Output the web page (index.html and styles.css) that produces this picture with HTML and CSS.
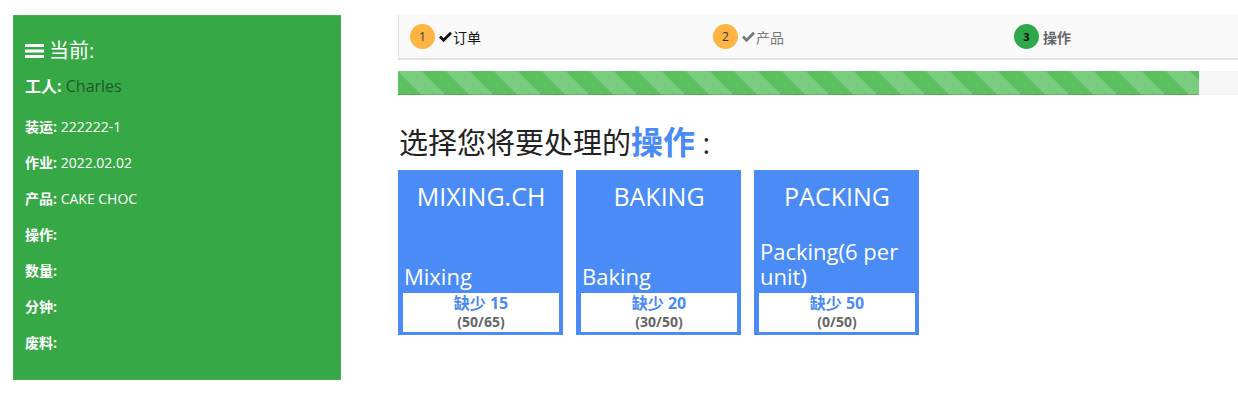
FILE: index.html
```html
<!DOCTYPE html>
<html lang="zh">
<head>
<meta charset="utf-8">
<title>操作</title>
<link rel="stylesheet" href="styles.css">
</head>
<body>
<div class="page">
  <aside class="sidebar">
    <div class="side-title">
      <svg class="burger" width="19" height="14" viewBox="0 0 19 14"><rect x="0" y="0" width="19" height="3"/><rect x="0" y="5.5" width="19" height="3"/><rect x="0" y="11" width="19" height="3"/></svg>
      <span>当前:</span>
    </div>
    <div class="worker"><b>工人:</b> <span class="worker-name">Charles</span></div>
    <ul class="facts">
      <li><b>装运:</b> 222222-1</li>
      <li><b>作业:</b> 2022.02.02</li>
      <li><b>产品:</b> CAKE CHOC</li>
      <li><b>操作:</b></li>
      <li><b>数量:</b></li>
      <li><b>分钟:</b></li>
      <li><b>废料:</b></li>
    </ul>
  </aside>

  <main class="main">
    <nav class="stepper">
      <div class="step">
        <span class="num num-done">1</span>
        <span class="label label-first"><svg class="check" width="13" height="11" viewBox="0 0 13 11"><path d="M1 5.6 L4.6 9.2 L12 1.8" fill="none" stroke="currentColor" stroke-width="2.8"/></svg>订单</span>
      </div>
      <div class="step">
        <span class="num num-done">2</span>
        <span class="label label-done"><svg class="check" width="13" height="11" viewBox="0 0 13 11"><path d="M1 5.6 L4.6 9.2 L12 1.8" fill="none" stroke="currentColor" stroke-width="2.8"/></svg>产品</span>
      </div>
      <div class="step">
        <span class="num num-active">3</span>
        <span class="label label-active">操作</span>
      </div>
    </nav>

    <div class="progress"><div class="progress-bar" style="width: 95.4%"></div></div>

    <h2 class="prompt">选择您将要处理的<strong>操作</strong> :</h2>

    <div class="cards">
      <div class="card">
        <div class="card-code">MIXING.CH</div>
        <div class="card-name">Mixing</div>
        <div class="card-status"><div class="missing">缺少 15</div><div class="ratio">(50/65)</div></div>
      </div>
      <div class="card">
        <div class="card-code">BAKING</div>
        <div class="card-name">Baking</div>
        <div class="card-status"><div class="missing">缺少 20</div><div class="ratio">(30/50)</div></div>
      </div>
      <div class="card">
        <div class="card-code">PACKING</div>
        <div class="card-name">Packing(6 per unit)</div>
        <div class="card-status"><div class="missing">缺少 50</div><div class="ratio">(0/50)</div></div>
      </div>
    </div>
  </main>
</div>
</body>
</html>
```

FILE: styles.css
```css
html, body {
  margin: 0;
  padding: 0;
  overflow: hidden;
  background: #fff;
}
body {
  font-family: "Open Sans", "Noto Sans CJK SC", sans-serif;
  color: #333;
  font-size: 14px;
}
.page {
  display: flex;
  align-items: flex-start;
  padding-top: 15px;
}

/* Sidebar */
.sidebar {
  box-sizing: border-box;
  margin-left: 13px;
  width: 328px;
  height: 365px;
  background: #37a846;
  border: 1px solid #44b053;
  color: #fff;
  padding: 20px 0 0 11px;
  flex: none;
}
.side-title {
  display: flex;
  align-items: center;
  gap: 5px;
  font-size: 20px;
  line-height: 30px;
}
.burger { fill: #fff; }
.worker {
  margin-top: 5px;
  font-size: 16px;
  line-height: 30px;
}
.worker-name { color: #1e5a2a; }
.facts {
  list-style: none;
  margin: 8px 0 0;
  padding: 0;
}
.facts li {
  font-size: 14px;
  line-height: 36px;
}

/* Main */
.main {
  margin-left: 57px;
  flex: 1;
  min-width: 0;
}
.stepper {
  display: grid;
  grid-template-columns: 301px 301px 1fr;
  height: 43px;
  background: #f9f9f9;
  border-left: 1px solid #e2e2e2;
  border-bottom: 2px solid #e2e2e2;
}
.step {
  display: flex;
  align-items: center;
  padding-left: 11px;
}
.step + .step { padding-left: 13px; }
.num {
  width: 25px;
  height: 25px;
  border-radius: 50%;
  display: flex;
  align-items: center;
  justify-content: center;
  font-size: 12px;
  color: #333;
  margin-right: 4px;
}
.num-done { background: #feb342; }
.num-active { background: #2ea84a; color: #111; font-weight: bold; font-size: 11px; }
.label {
  display: flex;
  align-items: center;
  font-size: 14px;
}
.check { margin-right: 1px; }
.label-first { color: #111; }
.label-done { color: #777; }
.label-active { color: #666; font-weight: bold; }

.progress {
  margin-top: 11px;
  height: 24px;
  background: #f5f5f5;
}
.progress-bar {
  height: 100%;
  background-color: #5cbf60;
  background-image: linear-gradient(45deg, rgba(255,255,255,.18) 25%, transparent 25%, transparent 50%, rgba(255,255,255,.18) 50%, rgba(255,255,255,.18) 75%, transparent 75%, transparent);
  background-size: 48px 48px;
  box-shadow: inset 0 -1px 0 rgba(0,0,0,.12);
}

.prompt {
  margin: 27px 0 8px 1px;
  font-size: 29px;
  font-weight: normal;
  line-height: 40px;
  height: 40px;
  color: #222;
}
.prompt strong {
  font-size: 32px;
  color: #4a8af4;
  font-weight: bold;
}

.cards {
  display: flex;
  gap: 13px;
}
.card {
  box-sizing: border-box;
  width: 165px;
  height: 165px;
  background: #4a8bf5;
  color: #fff;
  display: flex;
  flex-direction: column;
  padding: 0 4px 3px 5px;
}
.card-code {
  text-align: center;
  font-size: 25px;
  line-height: 32px;
  margin-top: 10px;
  flex: 1;
}
.card-name {
  font-size: 22px;
  line-height: 25px;
  margin-bottom: 4px;
  padding-left: 1px;
}
.card-status {
  background: #fff;
  text-align: center;
  font-weight: bold;
  padding: 1px 0 1px;
}
.missing {
  color: #4a8af4;
  font-size: 16px;
  line-height: 19px;
}
.ratio {
  color: #666;
  font-size: 14px;
  line-height: 18px;
}
```
